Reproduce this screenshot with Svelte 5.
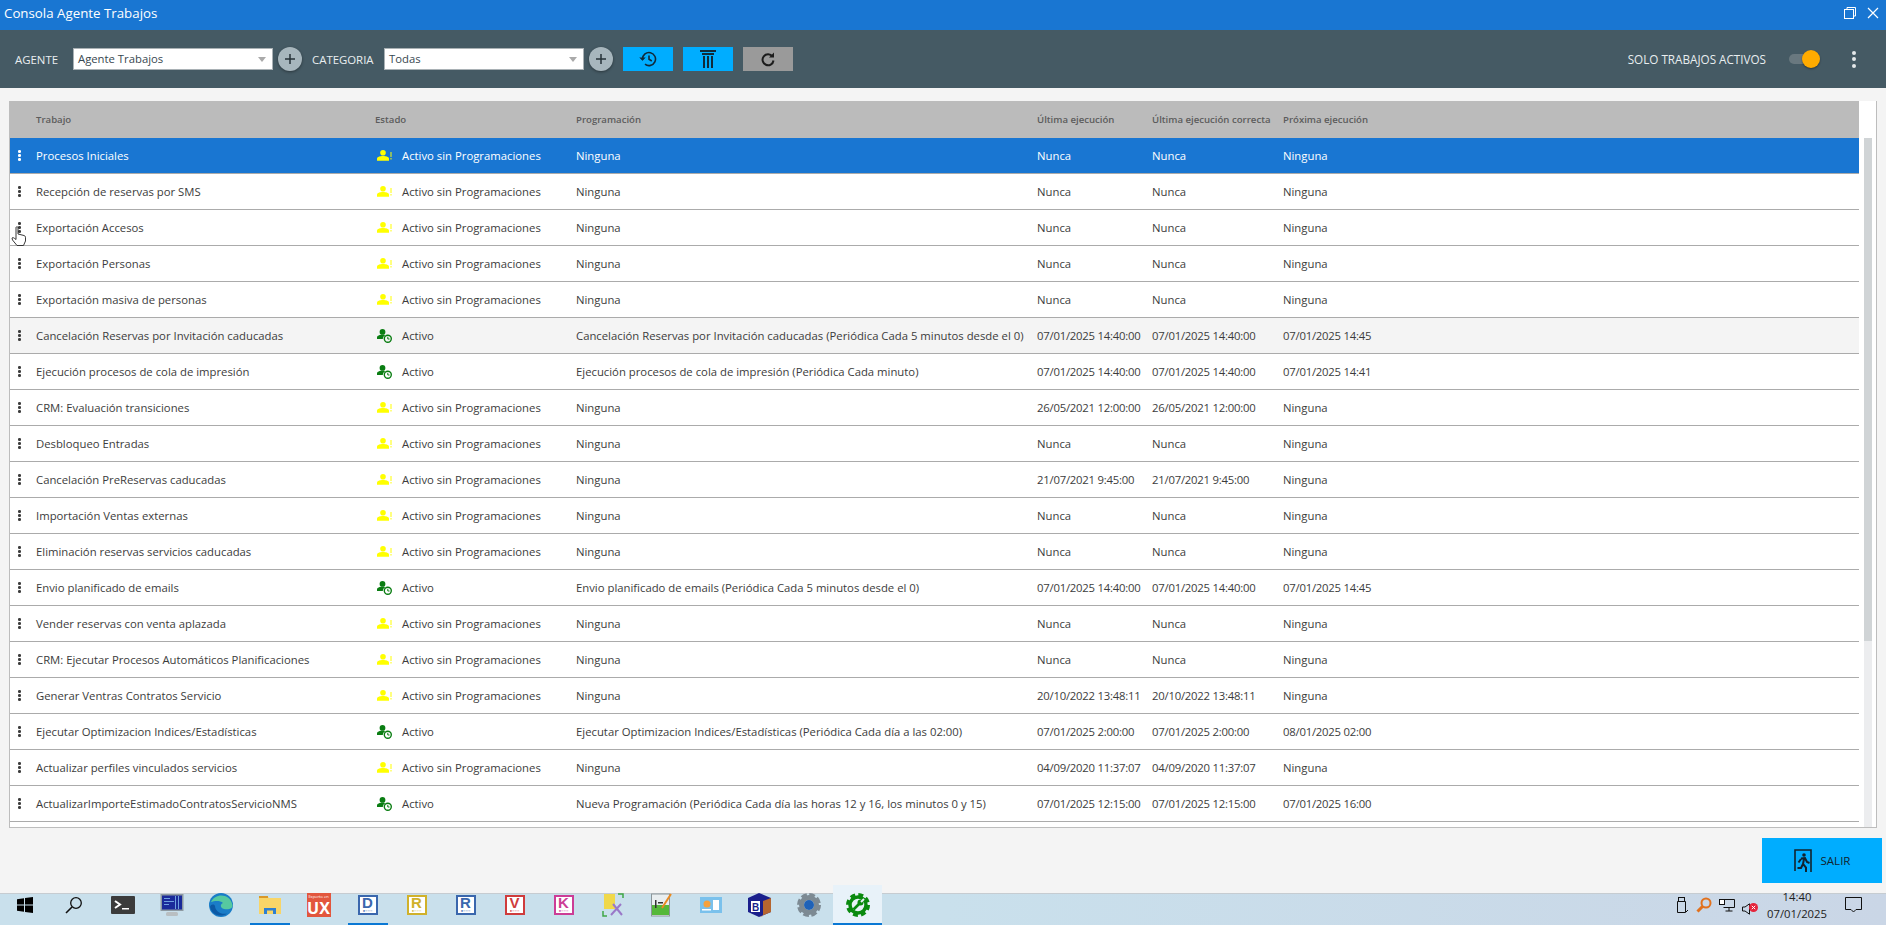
<script lang="ts">
	const idle = 'Activo sin Programaciones';
	const rows = [
		['Procesos Iniciales', idle, 'Ninguna', 'Nunca', 'Nunca', 'Ninguna'],
		['Recepción de reservas por SMS', idle, 'Ninguna', 'Nunca', 'Nunca', 'Ninguna'],
		['Exportación Accesos', idle, 'Ninguna', 'Nunca', 'Nunca', 'Ninguna'],
		['Exportación Personas', idle, 'Ninguna', 'Nunca', 'Nunca', 'Ninguna'],
		['Exportación masiva de personas', idle, 'Ninguna', 'Nunca', 'Nunca', 'Ninguna'],
		['Cancelación Reservas por Invitación caducadas', 'Activo', 'Cancelación Reservas por Invitación caducadas (Periódica Cada 5 minutos desde el 0)', '07/01/2025 14:40:00', '07/01/2025 14:40:00', '07/01/2025 14:45'],
		['Ejecución procesos de cola de impresión', 'Activo', 'Ejecución procesos de cola de impresión (Periódica Cada minuto)', '07/01/2025 14:40:00', '07/01/2025 14:40:00', '07/01/2025 14:41'],
		['CRM: Evaluación transiciones', idle, 'Ninguna', '26/05/2021 12:00:00', '26/05/2021 12:00:00', 'Ninguna'],
		['Desbloqueo Entradas', idle, 'Ninguna', 'Nunca', 'Nunca', 'Ninguna'],
		['Cancelación PreReservas caducadas', idle, 'Ninguna', '21/07/2021 9:45:00', '21/07/2021 9:45:00', 'Ninguna'],
		['Importación Ventas externas', idle, 'Ninguna', 'Nunca', 'Nunca', 'Ninguna'],
		['Eliminación reservas servicios caducadas', idle, 'Ninguna', 'Nunca', 'Nunca', 'Ninguna'],
		['Envio planificado de emails', 'Activo', 'Envio planificado de emails (Periódica Cada 5 minutos desde el 0)', '07/01/2025 14:40:00', '07/01/2025 14:40:00', '07/01/2025 14:45'],
		['Vender reservas con venta aplazada', idle, 'Ninguna', 'Nunca', 'Nunca', 'Ninguna'],
		['CRM: Ejecutar Procesos Automáticos Planificaciones', idle, 'Ninguna', 'Nunca', 'Nunca', 'Ninguna'],
		['Generar Ventras Contratos Servicio', idle, 'Ninguna', '20/10/2022 13:48:11', '20/10/2022 13:48:11', 'Ninguna'],
		['Ejecutar Optimizacion Indices/Estadísticas', 'Activo', 'Ejecutar Optimizacion Indices/Estadísticas (Periódica Cada día a las 02:00)', '07/01/2025 2:00:00', '07/01/2025 2:00:00', '08/01/2025 02:00'],
		['Actualizar perfiles vinculados servicios', idle, 'Ninguna', '04/09/2020 11:37:07', '04/09/2020 11:37:07', 'Ninguna'],
		['ActualizarImporteEstimadoContratosServicioNMS', 'Activo', 'Nueva Programación (Periódica Cada día las horas 12 y 16, los minutos 0 y 15)', '07/01/2025 12:15:00', '07/01/2025 12:15:00', '07/01/2025 16:00']
	];
	const isDate = (v: string) => /^\d/.test(v);
</script>

<div class="page">
	<header class="titlebar">
		<span>Consola Agente Trabajos</span>
		<div class="win-buttons">
			<svg width="14" height="14" viewBox="0 0 14 14" fill="none" stroke="#fff" stroke-width="1"><rect x="1.500" y="3.500" width="9" height="9" /><path d="M4 3.500V1.500H12.500V10H10.500" /></svg>
			<svg width="12" height="12" viewBox="0 0 12 12" fill="none" stroke="#fff" stroke-width="1.200"><path d="M1 1L11 11M11 1L1 11" /></svg>
		</div>
	</header>

	<div class="toolbar">
		<label class="tool-label agent-label" for="agente">AGENTE</label>
		<div class="select" id="agente">Agente Trabajos<i class="caret"></i></div>
		<button class="round" aria-label="Añadir agente"><svg width="12" height="12" viewBox="0 0 12 12"><path d="M6 1V11M1 6H11" stroke="#263238" stroke-width="1.500" /></svg></button>
		<label class="tool-label cat-label" for="categoria">CATEGORIA</label>
		<div class="select" id="categoria">Todas<i class="caret"></i></div>
		<button class="round" aria-label="Añadir categoría"><svg width="12" height="12" viewBox="0 0 12 12"><path d="M6 1V11M1 6H11" stroke="#263238" stroke-width="1.500" /></svg></button>
		<button class="square first" aria-label="Historial">
			<svg width="18" height="16" viewBox="0 0 18 16" fill="none" stroke="#102a3a" stroke-width="1.600"><path d="M3.500 8A6.500 6.500 0 1 1 6 13.200" /><path d="M0.800 6.600L3.500 9.400L6.200 6.600" fill="#102a3a" stroke-width="0.800" /><path d="M10 4.500V8.300L12.800 10" /></svg>
		</button>
		<button class="square" aria-label="Columnas">
			<svg width="16" height="18" viewBox="0 0 16 18" fill="#102a3a"><rect x="0" y="0" width="16" height="2" /><rect x="2" y="3" width="12" height="2" /><rect x="3" y="6" width="2" height="12" /><rect x="7" y="6" width="2" height="12" /><rect x="11" y="6" width="2" height="12" /></svg>
		</button>
		<button class="square grey" aria-label="Refrescar">
			<svg width="14" height="15" viewBox="0 0 14 15" fill="none" stroke="#1c1c1c" stroke-width="2"><path d="M11.500 4.500A5.500 5.500 0 1 0 12.500 8.500" /><path d="M13 0.500V5.500H8" fill="#1c1c1c" stroke="none" /></svg>
		</button>

		<span class="spacer"></span>
		<span class="tool-label">SOLO TRABAJOS ACTIVOS</span>
		<span class="toggle"><i></i></span>
		<span class="kebab"><i></i><i></i><i></i></span>
	</div>

	<main class="content">
		<section class="grid">
			<div class="table">
				<div class="row head">
					<span></span><span>Trabajo</span><span>Estado</span><span>Programación</span><span>Última ejecución</span><span>Última ejecución correcta</span><span>Próxima ejecución</span>
				</div>
				{#each rows as r, i}
					<div class="row" class:selected={i === 0} class:hover={i === 5}>
						<span class="dots"><i></i><i></i><i></i></span>
						<span>{r[0]}</span>
						<span class="state">
							{#if r[1] === idle}
								<svg class="state-icon" width="15" height="11" viewBox="0 0 15 11" fill="#ffff00"><circle cx="6" cy="2.800" r="2.800" /><path d="M0 10.800V8.800C0 6.800 3 6 6 6S12 6.800 12 8.800V10.800Z" /><rect x="13.500" y="2" width="1" height="5" /><rect x="13.500" y="8" width="1" height="1.500" /></svg>
							{:else}
								<svg class="state-icon" width="15" height="14" viewBox="0 0 15 14"><circle cx="5.500" cy="2.900" r="2.900" fill="#0a7d12" /><path d="M0 10V8.500C0 6.600 2.800 5.800 5.500 5.800C6.500 5.800 7.400 5.900 8.200 6.200C6.700 7 5.900 8.400 5.800 10Z" fill="#0a7d12" /><circle cx="10.800" cy="9.700" r="3.500" fill="none" stroke="#0a7d12" stroke-width="1.400" /><path d="M10.800 7.800V10H12.500" fill="none" stroke="#0a7d12" stroke-width="1" /></svg>
							{/if}
							{r[1]}
						</span>
						<span>{r[2]}</span>
						<span class:num={isDate(r[3])}>{r[3]}</span>
						<span class:num={isDate(r[4])}>{r[4]}</span>
						<span class:num={isDate(r[5])}>{r[5]}</span>
					</div>
				{/each}
			</div>
			<div class="scrollbar"><div class="thumb"></div></div>
		</section>
		<div class="actions">
			<button class="exit">
				<svg width="18" height="24" viewBox="0 0 18 24" fill="none"><path d="M1 22V1H17V23" stroke="#12232e" stroke-width="1.600" /><circle cx="10" cy="6" r="1.800" fill="#12232e" /><path d="M7 9.500L11 9L13 13L15.500 14M10 10L9 15L12 18.500V23M9 15L7 19H3.500M7 10L4.500 13.500" stroke="#12232e" stroke-width="2" /></svg>
				SALIR
			</button>
		</div>
	</main>

	<footer class="taskbar">
		<div class="apps">
			<span class="app"><svg width="16" height="16" viewBox="0 0 16 16" fill="#000"><path d="M0 2.200L7 1.200V7.500H0ZM8 1L16 0V7.500H8ZM0 8.500H7V14.800L0 13.800ZM8 8.500H16V16L8 15Z" /></svg></span>
			<span class="app"><svg width="18" height="18" viewBox="0 0 18 18" fill="none" stroke="#111" stroke-width="1.300"><circle cx="11" cy="7" r="5.300" /><path d="M7 11L1 17" stroke-width="1.600" /></svg></span>
			<span class="app"><svg width="24" height="18" viewBox="0 0 24 18"><rect width="24" height="18" rx="1" fill="#3b3b3b" /><path d="M4 5L9 8.500L4 12" fill="none" stroke="#fff" stroke-width="2" /><rect x="11" y="12" width="7" height="1.500" fill="#fff" /></svg></span>
			<span class="app"><svg width="24" height="24" viewBox="0 0 24 24"><rect x="0.500" y="1" width="23" height="17" fill="#8e9aa2" /><rect x="2" y="2.500" width="20" height="14" fill="#1a2a9a" /><path d="M4 5H10V6H4ZM4 8H14V9H4ZM4 11H9V12H4ZM15 3V16H16V3ZM18 3V16H19V3Z" fill="#6ea0e0" /><rect x="6" y="19" width="12" height="4" rx="1.500" fill="#b9bfc2" /></svg></span>
			<span class="app"><svg width="24" height="24" viewBox="0 0 24 24"><circle cx="12" cy="12" r="12" fill="#1a7dc8" /><path d="M2 9C6 0 21 0 23.500 12C24 16 19 17 15 16C11 15 11 11 14 10C11 7 5 8 2 9Z" fill="#56c9a0" /><path d="M6 13C6 18 12 22 18 20.500C13 24.500 3 23 1 14C2 11 5 11 6 13Z" fill="#0c59a4" /></svg></span>
			<span class="app active"><svg width="22" height="20" viewBox="0 0 22 20"><path d="M0 1H8L10 3H22V19H0Z" fill="#f8d568" /><rect y="1" width="9" height="2" fill="#d9982a" /><path d="M5 19V13H17V19H14V15.500H8V19Z" fill="#2d7fd0" /></svg></span>
			<span class="app"><span class="ux"><small>Experto en</small>UX</span></span>
			<span class="app active"><span class="tile d">D<i>●○○○</i></span></span>
			<span class="app"><span class="tile r1">R<i>●○○○</i></span></span>
			<span class="app"><span class="tile r2">R<i>●○○○</i></span></span>
			<span class="app"><span class="tile v">V<i>●○○○</i></span></span>
			<span class="app"><span class="tile k">K<i>●○○○</i></span></span>
			<span class="app"><svg width="22" height="24" viewBox="0 0 22 24" fill="none"><rect x="2" y="1" width="11" height="15" fill="#f0d84a" /><path d="M1 18V23H5M16 1H21V5" stroke="#3fa646" stroke-width="1.500" /><path d="M9 22L19 11M11 11L20 22" stroke="#9a78c8" stroke-width="2" /></svg></span>
			<span class="app"><svg width="21" height="24" viewBox="0 0 21 24"><rect x="0.500" y="1" width="18" height="22" fill="#e9eef0" stroke="#8b9599" /><rect x="1" y="12" width="17" height="10" fill="#55b83a" /><rect x="4" y="7" width="1.500" height="8" fill="#333" /><rect x="7" y="9" width="5" height="1.500" fill="#333" /><path d="M11 15L20 1" stroke="#e98a22" stroke-width="2" /></svg></span>
			<span class="app"><svg width="22" height="16" viewBox="0 0 22 16"><rect width="22" height="16" fill="#7ac1ec" /><circle cx="7" cy="7" r="3.500" fill="#f5a13d" /><rect x="13" y="3" width="6" height="10" fill="#fff" /><rect x="2" y="12" width="9" height="1.500" fill="#fff" /></svg></span>
			<span class="app"><svg width="23" height="24" viewBox="0 0 23 24"><path d="M11 0L23 5V19L11 24L0 19V5Z" fill="#1a1f8c" /><path d="M11 24L23 19V5L15 8V23Z" fill="#b5652f" /><rect x="3" y="8" width="9" height="11" fill="#fff" /><text x="4" y="17.500" font-size="10" font-weight="700" fill="#1a1f8c" font-family="Liberation Sans, sans-serif">B</text></svg></span>
			<span class="app"><svg width="24" height="24" viewBox="0 0 24 24" fill="none"><circle cx="12" cy="12" r="7.500" stroke="#7d8a93" stroke-width="5" /><circle cx="12" cy="12" r="10" stroke="#7d8a93" stroke-width="4" stroke-dasharray="5.500 2.350" /><circle cx="12" cy="12" r="5" fill="#1f62b8" /></svg></span>
			<span class="app current"><svg width="24" height="24" viewBox="0 0 24 24" fill="none"><circle cx="12" cy="12" r="8" stroke="#0a8a0f" stroke-width="3.500" /><circle cx="12" cy="12" r="10.500" stroke="#0a8a0f" stroke-width="3" stroke-dasharray="5 3.250" /><path d="M7.500 16.500L13 11" stroke="#0a8a0f" stroke-width="2.600" /><circle cx="14.500" cy="9.500" r="3" fill="#0a8a0f" /><path d="M15 9L18 6" stroke="#e8f2f9" stroke-width="2" /></svg></span>
		</div>
		<div class="tray">
			<svg width="14" height="16" viewBox="0 0 14 16" fill="none" stroke="#111"><rect x="3.500" y="0.500" width="6" height="4" /><path d="M2.500 4.500H10.500V15.500H2.500Z" /><path d="M11 15L13 13" /></svg>
			<svg width="16" height="16" viewBox="0 0 16 16" fill="none" stroke="#e2711d"><circle cx="10" cy="6" r="4.500" stroke-width="2" /><path d="M6.500 9.500L1.500 14.500" stroke-width="3" /></svg>
			<svg width="16" height="14" viewBox="0 0 16 14" fill="none" stroke="#111"><path d="M4.500 1.500H15.500V9.500H4.500M10 9.500V13M6.500 13H13.500" /><rect x="0.500" y="1.500" width="5" height="5" fill="#fff" /></svg>
			<span class="volume">
				<svg width="9" height="12" viewBox="0 0 9 12" fill="none" stroke="#111"><path d="M0.500 4H3L7.500 0.800V11.200L3 8H0.500Z" /></svg>
				<svg class="muted" width="9" height="9" viewBox="0 0 9 9"><circle cx="4.500" cy="4.500" r="4.500" fill="#e5243b" /><path d="M2.800 2.800L6.200 6.200M6.200 2.800L2.800 6.200" stroke="#fff" /></svg>
			</span>
			<div class="clock">14:40<br />07/01/2025</div>
			<svg class="notif" width="17" height="16" viewBox="0 0 17 16" fill="none" stroke="#111"><path d="M0.500 0.500H16.500V12.500H11L8.500 15L6 12.500H0.500Z" /></svg>
		</div>
	</footer>
	<svg class="cursor" width="16" height="21" viewBox="0 0 16 21"><path d="M5 1.500C5 0.500 7 0.500 7 1.500V8L9 8.500L13 9.500C14.500 10 14.500 11 14.500 12V15L12.500 19.500H6L1.500 14L1 12C2 11 3 12 5 13.500Z" fill="#fff" stroke="#222" stroke-width="0.900" /></svg>
</div>

<style>
	:global(body) {
		margin: 0;
		background: #f4f4f4;
		font-family: 'Open Sans', 'Noto Sans', sans-serif;
	}

	.page {
		position: relative;
		display: flex;
		flex-direction: column;
		width: 1886px;
		height: 925px;
		overflow: hidden;
	}

	.titlebar {
		display: flex;
		align-items: center;
		justify-content: space-between;
		flex: 0 0 30px;
		padding: 0 7px 4px 4px;
		box-sizing: border-box;
		background: #1976d2;
		color: #fff;
		font-size: 13.300px;
	}

	.win-buttons {
		display: flex;
		align-items: center;
		gap: 10px;
	}

	.toolbar {
		display: flex;
		align-items: center;
		flex: 0 0 58px;
		padding: 0 30px 0 15px;
		box-sizing: border-box;
		background: #455a64;
	}

	.tool-label {
		color: #e9eef0;
		font-size: 11.700px;
	}

	.agent-label {
		width: 58px;
		font-size: 11.400px;
	}

	.cat-label {
		width: 72px;
		margin-left: 10px;
		font-size: 11.400px;
	}

	.select {
		position: relative;
		width: 200px;
		height: 22px;
		padding-left: 4px;
		box-sizing: border-box;
		background: #fff;
		border: 1px solid #a9b1b5;
		color: #37474f;
		font-size: 11.300px;
		line-height: 20px;
	}

	.caret {
		position: absolute;
		right: 6px;
		top: 8px;
		border: 4px solid transparent;
		border-top: 5px solid #aaa;
		border-bottom: 0;
	}

	.round {
		display: flex;
		align-items: center;
		justify-content: center;
		width: 24px;
		height: 24px;
		margin-left: 5px;
		padding: 0;
		border: 0;
		border-radius: 50%;
		background: #a7b6bd;
		box-shadow: 0 1px 3px rgba(0, 0, 0, 0.4);
	}

	.square {
		display: flex;
		align-items: center;
		justify-content: center;
		width: 50px;
		height: 24px;
		margin-left: 10px;
		padding: 0;
		border: 0;
		background: #00adff;
	}

	.square.grey {
		background: #9a9a9a;
	}

	.spacer {
		flex: 1;
	}

	.toggle {
		position: relative;
		width: 26px;
		height: 10px;
		margin: 0 37px 0 23px;
		border-radius: 5px;
		background: #69787f;
	}

	.toggle i {
		position: absolute;
		right: -5px;
		top: -4px;
		width: 18px;
		height: 18px;
		border-radius: 50%;
		background: #ffab00;
		box-shadow: 0 1px 2px rgba(0, 0, 0, 0.4);
	}

	.kebab,
	.dots {
		display: flex;
		flex-direction: column;
		align-items: center;
	}

	.kebab {
		gap: 2.500px;
	}

	.kebab i {
		width: 4px;
		height: 4px;
		border-radius: 50%;
		background: #e4e8ea;
	}

	.content {
		flex: 1;
		display: flex;
		flex-direction: column;
		padding: 13px 9px 0;
		min-height: 0;
	}

	.grid {
		display: flex;
		width: 1868px;
		height: 727px;
		box-sizing: border-box;
		background: #fff;
		border: 1px solid #bdbdbd;
		border-top: 0;
	}

	.table {
		width: 1849px;
		overflow: hidden;
	}

	.row {
		display: grid;
		grid-template-columns: 26px 339px 201px 461px 115px 131px 1fr;
		align-items: center;
		height: 36px;
		box-sizing: border-box;
		border-bottom: 1px solid #ababab;
		color: #3c3c3c;
		font-size: 11.320px;
		white-space: nowrap;
	}

	.row.head {
		height: 37px;
		background: #bbb;
		border-bottom: 0;
		color: #5c5c5c;
		font-size: 9.600px;
		font-weight: 600;
	}

	.row.selected {
		background: #1976d2;
		color: #fff;
	}

	.row.hover {
		background: #f4f4f4;
	}

	.num {
		letter-spacing: -0.220px;
	}

	.dots {
		width: 19px;
		gap: 1.200px;
	}

	.dots i {
		width: 2.600px;
		height: 2.600px;
		border-radius: 50%;
		background: currentColor;
	}

	.state {
		display: flex;
		align-items: center;
	}

	.state-icon {
		flex: 0 0 auto;
		margin: 0 10px 0 2px;
	}

	.scrollbar {
		width: 8px;
		margin-left: 5px;
		margin-top: 37px;
		background: #ecedef;
	}

	.thumb {
		height: 503px;
		background: #d0d4d6;
	}

	.actions {
		display: flex;
		justify-content: flex-end;
		margin: 10px -5px 0 0;
	}

	.exit {
		display: flex;
		align-items: center;
		justify-content: center;
		gap: 9px;
		width: 120px;
		height: 45px;
		padding: 0;
		border: 0;
		background: #00adff;
		color: #12232e;
		font-family: inherit;
		font-size: 11.500px;
	}

	.taskbar {
		position: absolute;
		left: 0;
		right: 0;
		bottom: 0;
		display: flex;
		justify-content: space-between;
		height: 32px;
		background: linear-gradient(90deg, #c9e0ec, #c9e0ec 50%, #cad6e6);
		border-top: 1px solid #c6ccd1;
		box-sizing: border-box;
	}

	.apps {
		display: flex;
	}

	.app {
		position: relative;
		display: flex;
		align-items: center;
		justify-content: center;
		width: 49px;
		padding-bottom: 9px;
		box-sizing: border-box;
	}

	.app.active::after,
	.app.current::after {
		content: '';
		position: absolute;
		left: 5px;
		right: 4px;
		bottom: 0;
		height: 2px;
		background: #0a78d4;
	}

	.app.current {
		background: #e8f2f9;
		margin-top: -9px;
		height: 40px;
		padding-top: 8px;
	}

	.app.current::after {
		left: 0;
		right: 0;
	}

	.ux {
		display: flex;
		flex-direction: column;
		align-items: center;
		width: 24px;
		height: 24px;
		background: #e2563d;
		color: #fff;
		font-size: 16px;
		font-weight: 700;
		line-height: 15px;
	}

	.ux small {
		font-size: 4px;
		font-weight: 400;
		line-height: 8px;
	}

	.tile {
		display: flex;
		flex-direction: column;
		align-items: center;
		width: 16px;
		height: 16px;
		background: #fff;
		border: 2px solid currentColor;
		font-family: 'Liberation Sans', sans-serif;
		font-size: 15px;
		font-weight: 700;
		line-height: 12px;
	}

	.tile i {
		font-size: 4px;
		line-height: 4px;
		font-style: normal;
		white-space: nowrap;
	}

	.tile.d,
	.tile.r2 {
		color: #3a67ad;
	}

	.tile.r1 {
		color: #d0b12b;
	}

	.tile.v {
		color: #cf3c3c;
	}

	.tile.k {
		color: #cc3d96;
	}

	.tray {
		display: flex;
		align-items: center;
		gap: 7px;
		padding: 0 24px 9px 0;
	}

	.volume {
		position: relative;
		width: 16px;
		height: 14px;
	}

	.muted {
		position: absolute;
		right: 0;
		bottom: 0;
	}

	.clock {
		width: 62px;
		margin-left: 1px;
		color: #222;
		font-size: 11.300px;
		line-height: 17px;
		text-align: center;
	}

	.notif {
		margin-left: 10px;
	}

	.cursor {
		position: absolute;
		left: 11px;
		top: 226px;
	}
</style>
